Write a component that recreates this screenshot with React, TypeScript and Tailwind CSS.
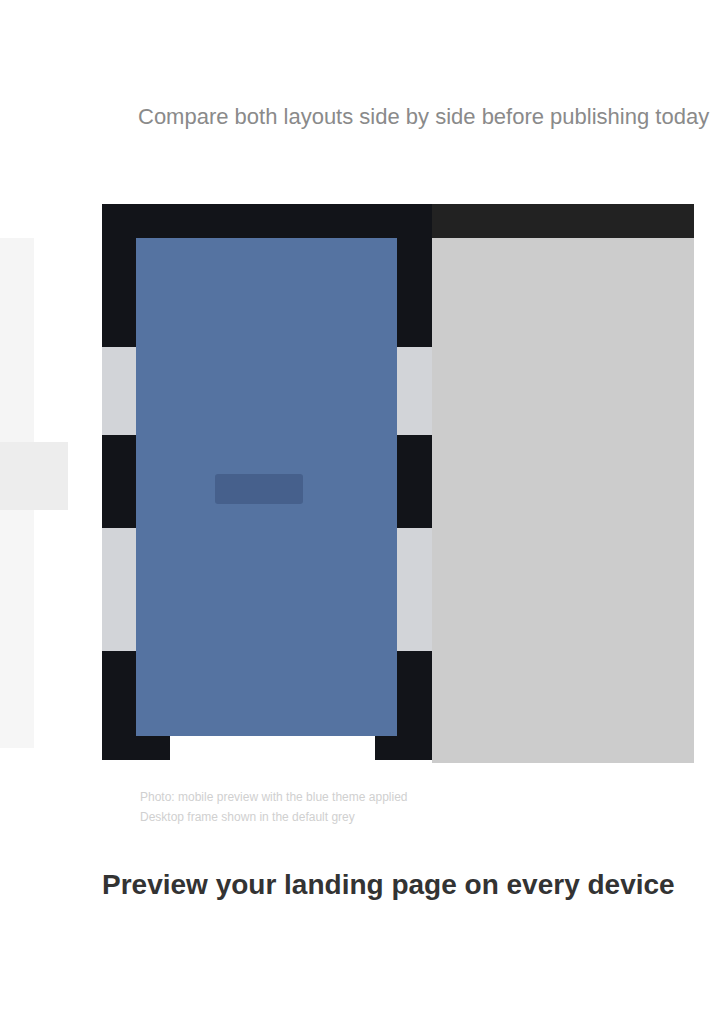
import React from 'react';

const PhotoLeft: React.FC = () => (
    <svg width="330" height="556" viewBox="0 0 330 556" className="block shrink-0">
        <rect x="0" y="0" width="330" height="556" fill="#121419" />
        <rect x="0" y="143" width="330" height="88" fill="#d2d4d8" />
        <rect x="0" y="324" width="330" height="123" fill="#d2d4d8" />
        <rect x="34" y="34" width="261" height="498" fill="#5573a1" />
        <rect x="113" y="270" width="88" height="30" rx="3" fill="#46608c" />
        <rect x="68" y="532" width="205" height="24" fill="#ffffff" />
    </svg>
);

const PhotoRight: React.FC = () => (
    <div className="flex flex-col w-[262px] h-[559px] shrink-0">
        <div className="h-[34px] bg-[#222222]" />
        <div className="flex-1 bg-[#cccccc]" />
    </div>
);

export default function App() {
    return (
        <div className="min-h-[1017px] bg-white font-['Liberation_Sans',Arial,sans-serif]">
            <div className="pt-[100px] pl-[138px]">
                <p className="text-[22px] leading-[34px] text-[#8a8a8a] whitespace-nowrap">
                    Compare both layouts side by side before publishing today
                </p>
            </div>

            <div className="mt-[70px] flex items-start">
                <div className="flex flex-col mt-[34px] w-[34px] shrink-0">
                    <div className="h-[204px] bg-[#f5f5f5]" />
                    <div className="h-[68px] w-[68px] bg-[#ededed]" />
                    <div className="h-[238px] bg-[#f6f6f6]" />
                </div>
                <div className="ml-[68px] flex">
                    <PhotoLeft />
                    <PhotoRight />
                </div>
            </div>

            <div className="mt-[24px] pl-[140px] text-[12px] leading-[20px] text-[#d0d0d0]">
                <p>Photo: mobile preview with the blue theme applied</p>
                <p>Desktop frame shown in the default grey</p>
            </div>

            <div className="mt-[40px] pl-[102px]">
                <h2 className="text-[28px] leading-[36px] font-bold text-[#333333] whitespace-nowrap">
                    Preview your landing page on every device
                </h2>
            </div>
        </div>
    );
}
